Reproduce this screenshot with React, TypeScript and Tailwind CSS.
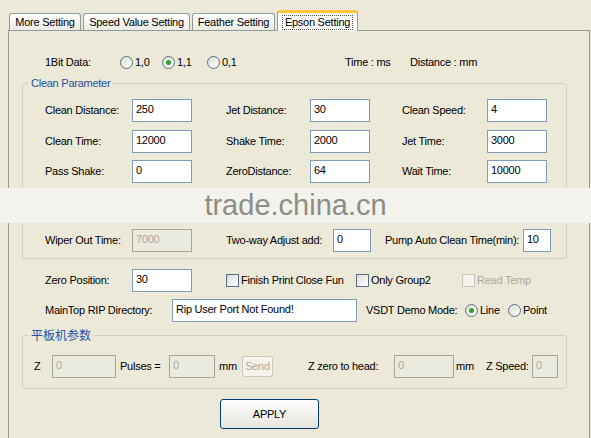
import type { ReactNode } from 'react'

const FONT = "font-['Liberation_Sans',Arial,sans-serif] text-[11px] tracking-[-0.25px]"

function Tab({ label, width, active }: { label: string; width: string; active?: boolean }) {
  if (active) {
    return (
      <div
        className={`relative z-10 -mb-px flex h-[21px] items-center justify-center rounded-t-[3px] border border-b-0 border-[#919B9C] border-t-[3px] border-t-[#FFC83C] bg-[#FCFCFB] ${width}`}
      >
        <span className="border border-dotted border-[#555] px-[2px] leading-[13px]">{label}</span>
      </div>
    )
  }
  return (
    <div
      className={`flex h-[17px] items-center justify-center rounded-t-[3px] border border-b-0 border-[#919B9C] bg-gradient-to-b from-white to-[#ECEBE5] pt-[1px] ${width}`}
    >
      {label}
    </div>
  )
}

function Field({ value, width, disabled }: { value: string; width: string; disabled?: boolean }) {
  return (
    <div
      className={`h-[23px] shrink-0 border px-[3px] pt-[2px] leading-[14px] ${width} ${
        disabled ? 'border-[#A6A69C] bg-[#EBEADF] text-[#ACA899]' : 'border-[#7F9DB9] bg-white text-black'
      }`}
    >
      {value}
    </div>
  )
}

function Label({ children, width, className = '' }: { children: ReactNode; width?: string; className?: string }) {
  return <span className={`shrink-0 whitespace-nowrap ${width ?? ''} ${className}`}>{children}</span>
}

function Radio({ label, checked, width }: { label: string; checked?: boolean; width?: string }) {
  return (
    <div className={`flex shrink-0 items-center gap-[2px] ${width ?? ''}`}>
      <span className="flex h-[13px] w-[13px] items-center justify-center rounded-full border border-[#5A6F86] bg-gradient-to-br from-[#DCDCD6] to-white">
        {checked && <span className="h-[5px] w-[5px] rounded-full bg-[#2FA12F]" />}
      </span>
      <span>{label}</span>
    </div>
  )
}

function Check({ label, width, disabled }: { label: string; width?: string; disabled?: boolean }) {
  return (
    <div className={`flex shrink-0 items-center gap-[2px] ${width ?? ''}`}>
      <span
        className={`h-[13px] w-[13px] border ${
          disabled ? 'border-[#CAC8BB] bg-[#F4F3EE]' : 'border-[#5A6F86] bg-gradient-to-br from-[#DCDCD6] to-white'
        }`}
      />
      <span className={disabled ? 'text-[#ACA899]' : ''}>{label}</span>
    </div>
  )
}

function Group({ title, className = '', children }: { title: string; className?: string; children: ReactNode }) {
  return (
    <fieldset className={`ml-[13px] w-[545px] rounded-[3px] border border-[#D0D0BF] ${className}`}>
      <legend className="ml-[5px] px-[3px] leading-[14px] text-[#1F4FA6]">{title}</legend>
      {children}
    </fieldset>
  )
}

const cleanRows = [
  ['Clean Distance:', '250', 'Jet Distance:', '30', 'Clean Speed:', '4'],
  ['Clean Time:', '12000', 'Shake Time:', '2000', 'Jet Time:', '3000'],
  ['Pass Shake:', '0', 'ZeroDistance:', '64', 'Wait Time:', '10000'],
]

const rowGap = ['mt-[9px]', 'mt-[8px]', 'mt-[7px]']

export default function App() {
  return (
    <div className={`relative h-[438px] w-[591px] overflow-hidden bg-[#ECE9D8] text-black ${FONT}`}>
      {/* tab strip */}
      <div className="flex h-[30px] items-end gap-[2px] pl-[9px] pt-[10px]">
        <Tab label="More Setting" width="w-[72px]" />
        <Tab label="Speed Value Setting" width="w-[107px]" />
        <Tab label="Feather Setting" width="w-[83px]" />
        <Tab label="Epson Setting" width="w-[81px]" active />
      </div>

      {/* tab page */}
      <div className="ml-[8px] h-[420px] w-[582px] border border-[#919B9C] bg-[#ECE9D8]">
        <div className="mt-[23px] flex h-[16px] items-center pl-[36px]">
          <Label width="w-[75px]">1Bit Data:</Label>
          <Radio label="1,0" width="w-[42px]" />
          <Radio label="1,1" checked width="w-[45px]" />
          <Radio label="0,1" width="w-[138px]" />
          <Label width="w-[65px]">Time : ms</Label>
          <Label>Distance : mm</Label>
        </div>

        <Group title="Clean Parameter" className="mt-[6px] pb-[6px]">
          {cleanRows.map((r, i) => (
            <div key={r[0]} className={`flex h-[23px] items-center pl-[22px] ${rowGap[i]}`}>
              <Label width="w-[87px]">{r[0]}</Label>
              <Field value={r[1]} width="w-[60px]" />
              <Label width="w-[84px]" className="ml-[34px]">{r[2]}</Label>
              <Field value={r[3]} width="w-[60px]" />
              <Label width="w-[85px]" className="ml-[32px]">{r[4]}</Label>
              <Field value={r[5]} width="w-[60px]" />
            </div>
          ))}
          <div className="mt-[46px] flex h-[23px] items-center pl-[22px]">
            <Label width="w-[87px]">Wiper Out Time:</Label>
            <Field value="7000" width="w-[60px]" disabled />
            <Label width="w-[107px]" className="ml-[34px]">Two-way Adjust add:</Label>
            <Field value="0" width="w-[38px]" />
            <Label width="w-[138px]" className="ml-[14px]">Pump Auto Clean Time(min):</Label>
            <Field value="10" width="w-[28px]" />
          </div>
        </Group>

        <div className="mt-[10px] flex h-[23px] items-center pl-[36px]">
          <Label width="w-[87px]">Zero Position:</Label>
          <Field value="30" width="w-[60px]" />
          <div className="ml-[34px] flex">
            <Check label="Finish Print Close Fun" width="w-[130px]" />
            <Check label="Only Group2" width="w-[106px]" />
            <Check label="Read Temp" disabled />
          </div>
        </div>

        <div className="mt-[7px] flex h-[23px] items-center pl-[36px]">
          <Label width="w-[127px]">MainTop RIP Directory:</Label>
          <Field value="Rip User Port Not Found!" width="w-[185px]" />
          <Label width="w-[99px]" className="ml-[9px]">VSDT Demo Mode:</Label>
          <Radio label="Line" checked width="w-[43px]" />
          <Radio label="Point" />
        </div>

        <Group title="平板机参数" className="mt-[6px] pb-[10px] [&>legend]:font-['Noto_Sans_CJK_SC',sans-serif] [&>legend]:text-[12px] [&>legend]:tracking-normal">
          <div className="mt-[13px] flex h-[23px] items-center pl-[11px]">
            <Label width="w-[18px]">Z</Label>
            <Field value="0" width="w-[64px]" disabled />
            <Label width="w-[49px]" className="ml-[4px]">Pulses =</Label>
            <Field value="0" width="w-[46px]" disabled />
            <Label width="w-[23px]" className="ml-[4px]">mm</Label>
            <div className="flex h-[21px] w-[31px] shrink-0 items-center justify-center rounded-[3px] border border-[#C9C7BA] bg-[#F4F3EE] text-[#ACA899]">
              Send
            </div>
            <Label width="w-[86px]" className="ml-[35px]">Z zero to head:</Label>
            <Field value="0" width="w-[60px]" disabled />
            <Label width="w-[30px]" className="ml-[2px]">mm</Label>
            <Label width="w-[46px]">Z Speed:</Label>
            <Field value="0" width="w-[26px]" disabled />
          </div>
        </Group>

        <button className="ml-[211px] mt-[10px] flex h-[30px] w-[99px] items-center justify-center rounded-[3px] border border-[#003C74] bg-gradient-to-b from-white to-[#E6E5DC]">
          APPLY
        </button>
      </div>

      {/* watermark strip */}
      <div className="absolute left-0 right-0 top-[188px] flex h-[35px] items-center justify-center bg-[#F3F2EC]">
        <span className="font-['Liberation_Sans',Arial,sans-serif] text-[29px] tracking-normal text-[#8E8D86]">
          trade.china.cn
        </span>
      </div>
    </div>
  )
}
